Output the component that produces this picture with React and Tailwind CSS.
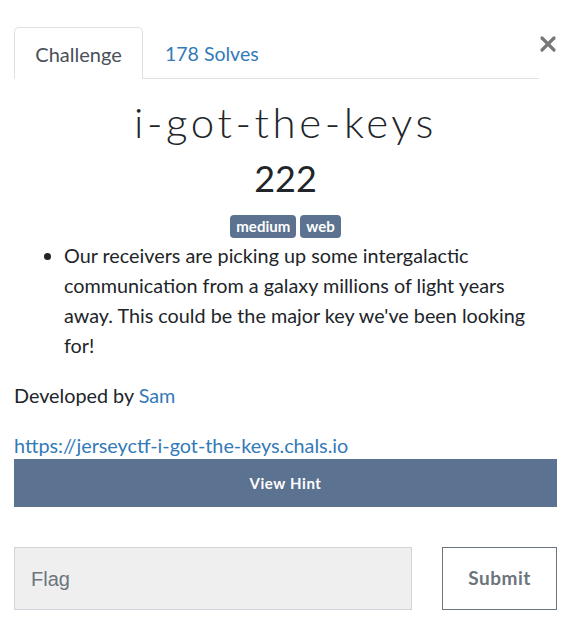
import { X } from 'lucide-react';

function App() {
  return (
    <div className="min-h-screen bg-white font-['Lato','Liberation_Sans',sans-serif] text-[#212529]">
      <div className="pl-[14px] pr-[25px] pt-[27px]">
        <div className="flex items-start">
          <div className="flex flex-1 border-b border-[#dee2e6]">
            <div className="w-[129px] h-[52px] -mb-px flex items-center justify-center pt-[2px] border border-[#dee2e6] border-b-white rounded-t-[5px] bg-white text-[20px] text-[#495057]">
              Challenge
            </div>
            <div className="h-[51px] pl-[22px] pt-[3px] flex items-center text-[19.5px] text-[#337ab7]">
              178 Solves
            </div>
          </div>
          <X className="w-[24px] h-[24px] mt-[5px] -ml-[3px] -mr-[3px] text-[#777]" strokeWidth={3.2} />
        </div>

        <h1 className="mt-[18px] text-center text-[42px] leading-[50px] font-light tracking-[3.6px] text-[#212529]">
          i-got-the-keys
        </h1>
        <div className="mt-[9px] text-center text-[36px] leading-[44px] font-normal">222</div>

        <div className="mt-[15px] flex justify-center gap-[4px]">
          <span className="h-[23px] px-[6px] rounded-[4px] bg-[#5b7290] text-white text-[15px] font-bold leading-[23px]">
            medium
          </span>
          <span className="h-[23px] px-[6px] rounded-[4px] bg-[#5b7290] text-white text-[15px] font-bold leading-[23px]">
            web
          </span>
        </div>

        <ul className="mt-[2px] pl-[50px] list-disc text-[19.8px] leading-[30px]">
          <li>
            Our receivers are picking up some intergalactic communication from a galaxy millions of light years away. This could be the major key we've been looking for!
          </li>
        </ul>

        <p className="mt-[20px] text-[19.8px] leading-[30px]">
          Developed by <span className="text-[#337ab7]">Sam</span>
        </p>

        <p className="mt-[20px] text-[19.8px] leading-[30px] text-[#337ab7]">
          https://jerseyctf-i-got-the-keys.chals.io
        </p>

        <button className="-mt-px w-full h-[48px] bg-[#5b7290] text-white text-[15px] font-bold tracking-[0.6px]">
          View Hint
        </button>

        <div className="mt-[40px] flex items-center">
          <div className="w-[398px] h-[63px] bg-[#efefef] border border-[#ced4da] flex items-center pl-[16px] text-[20px] text-[#6c757d] font-['Liberation_Sans',sans-serif]">
            Flag
          </div>
          <div className="flex-1" />
          <button className="w-[115px] h-[63px] border border-[#6c757d] bg-white text-[#6c757d] text-[19px] font-bold tracking-[0.5px]">
            Submit
          </button>
        </div>
      </div>
    </div>
  );
}

export default App;
